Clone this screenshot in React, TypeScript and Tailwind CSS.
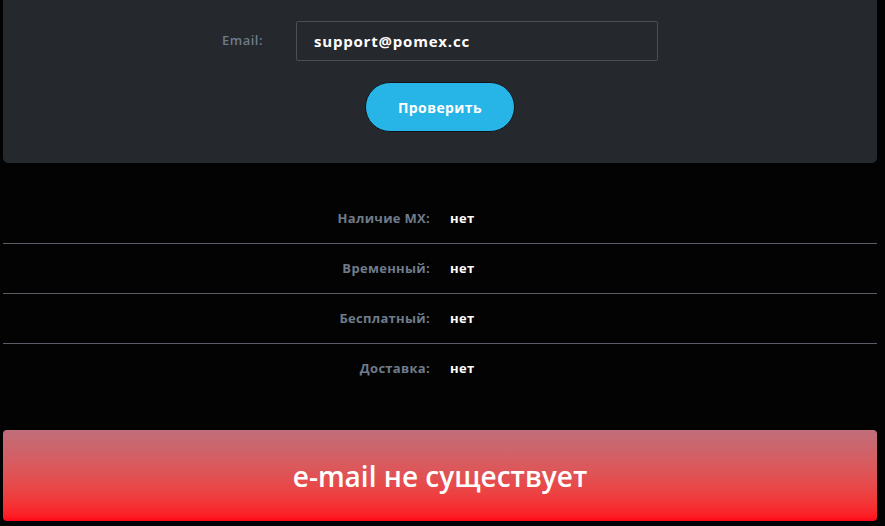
import { useState } from "react";

const rows = [
  { label: "Наличие MX:", value: "нет" },
  { label: "Временный:", value: "нет" },
  { label: "Бесплатный:", value: "нет" },
  { label: "Доставка:", value: "нет" },
];

export default function App() {
  const [email, setEmail] = useState("support@pomex.cc");

  return (
    <div className="min-h-[526px] w-full bg-[#030303] font-['Open_Sans','Noto_Sans',sans-serif]">
      <div className="ml-[3px] w-[874px]">
        {/* Form panel */}
        <div className="flex h-[163px] flex-col items-center rounded-b-[5px] bg-[#25282d] pt-[21px]">
          <div className="flex items-center">
            <label className="w-[74px] text-[13px] font-semibold tracking-[0.5px] text-[#6f7b8b]">Email:</label>
            <input
              value={email}
              onChange={(e) => setEmail(e.target.value)}
              className="h-[40px] w-[362px] rounded-[2px] border border-[#4b4e56] bg-[#25282d] px-[17px] text-[15px] font-bold tracking-[0.8px] text-white outline-none"
            />
          </div>
          <button className="mt-[21px] h-[50px] w-[150px] rounded-full border border-[#111418] bg-[#27b5e7] text-[14px] font-bold tracking-[0.4px] text-white">
            Проверить
          </button>
        </div>

        {/* Results */}
        <div className="mt-[31px]">
          {rows.map((row, i) => (
            <div
              key={row.label}
              className={`grid h-[50px] grid-cols-2 items-center text-[13px] font-bold tracking-[0.3px] ${
                i < rows.length - 1 ? "border-b border-[#5a5d66]" : ""
              }`}
            >
              <span className="pr-[10px] text-right text-[#6f7b8b]">{row.label}</span>
              <span className="pl-[10px] text-white">{row.value}</span>
            </div>
          ))}
        </div>

        {/* Status */}
        <div className="mt-[36px] flex h-[91px] items-center justify-center rounded-[4px] bg-gradient-to-b from-[#bf6e7a] to-[#ff0418]">
          <span className="text-[28px] font-semibold text-white">e-mail не существует</span>
        </div>
      </div>
    </div>
  );
}
